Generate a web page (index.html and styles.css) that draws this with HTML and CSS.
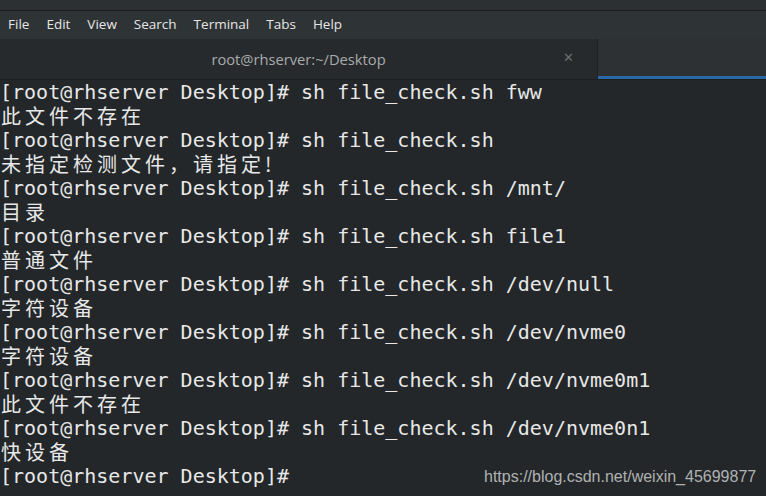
FILE: index.html
```html
<!DOCTYPE html>
<html lang="zh-CN">
  <head>
    <meta charset="UTF-8" />
    <title>root@rhserver:~/Desktop</title>
    <link rel="stylesheet" href="styles.css">
  </head>
  <body>
    <div class="topstrip"></div>
    <div class="menubar">
      <span class="menu">File</span>
      <span class="menu">Edit</span>
      <span class="menu">View</span>
      <span class="menu">Search</span>
      <span class="menu">Terminal</span>
      <span class="menu">Tabs</span>
      <span class="menu">Help</span>
    </div>
    <div class="tabbar">
      <div class="tab active">
        <span class="tab-title">root@rhserver:~/Desktop</span>
        <span class="tab-close">&#x2715;</span>
      </div>
      <div class="tab inactive"></div>
    </div>
    <div class="terminal">
      <div class="line">[root@rhserver Desktop]# sh file_check.sh fww</div>
      <div class="line cjk">此文件不存在</div>
      <div class="line">[root@rhserver Desktop]# sh file_check.sh</div>
      <div class="line cjk">未指定检测文件，请指定!</div>
      <div class="line">[root@rhserver Desktop]# sh file_check.sh /mnt/</div>
      <div class="line cjk">目录</div>
      <div class="line">[root@rhserver Desktop]# sh file_check.sh file1</div>
      <div class="line cjk">普通文件</div>
      <div class="line">[root@rhserver Desktop]# sh file_check.sh /dev/null</div>
      <div class="line cjk">字符设备</div>
      <div class="line">[root@rhserver Desktop]# sh file_check.sh /dev/nvme0</div>
      <div class="line cjk">字符设备</div>
      <div class="line">[root@rhserver Desktop]# sh file_check.sh /dev/nvme0m1</div>
      <div class="line cjk">此文件不存在</div>
      <div class="line">[root@rhserver Desktop]# sh file_check.sh /dev/nvme0n1</div>
      <div class="line cjk">快设备</div>
      <div class="line">[root@rhserver Desktop]# </div>
      <div class="watermark">https://blog.csdn.net/weixin_45699877</div>
    </div>
  </body>
</html>
```

FILE: styles.css
```css
body {
  margin: 0;
  width: 766px;
  height: 496px;
  overflow: hidden;
  background: #232729;
  font-family: "Open Sans", sans-serif;
}
.topstrip {
  height: 10px;
  background: #2c3033;
  border-bottom: 1px solid #181a1b;
}
.menubar {
  height: 28px;
  display: flex;
  align-items: center;
  background: #2e3336;
  color: #e6e6e6;
  font-size: 13.5px;
}
.menu {
  padding: 0 8px;
  margin-right: 1px;
  position: relative;
  top: -1px;
}
.tabbar {
  height: 40px;
  display: flex;
  border-bottom: 1px solid #1c1e1f;
}
.tab {
  height: 40px;
  box-sizing: border-box;
}
.tab.active {
  width: 598px;
  background: #272a2c;
  border-right: 1px solid #1f2223;
  display: flex;
  align-items: center;
  position: relative;
}
.tab-title {
  flex: 1;
  text-align: center;
  color: #a9abac;
  font-size: 14.7px;
}
.tab-close {
  position: absolute;
  right: 23px;
  top: 11px;
  color: #6b6e70;
  font-size: 13px;
  font-family: "DejaVu Sans", sans-serif;
}
.tab.inactive {
  flex: 1;
  background: #2d3134;
  border-bottom: 3px solid #2a69a8;
}
.terminal {
  font-family: "DejaVu Sans Mono", monospace;
  font-size: 20px;
  line-height: 24px;
  color: #e8e8e8;
  position: relative;
}
.line {
  height: 24px;
  white-space: pre;
}
.line.cjk {
  font-family: "Noto Sans CJK SC", "DejaVu Sans Mono", monospace;
  letter-spacing: 4px;
  padding-left: 1px;
}
.watermark {
  position: absolute;
  left: 484px;
  top: 385px;
  font-family: "Liberation Sans", Arial, sans-serif;
  font-size: 16px;
  color: #b0b2b3;
}
```
